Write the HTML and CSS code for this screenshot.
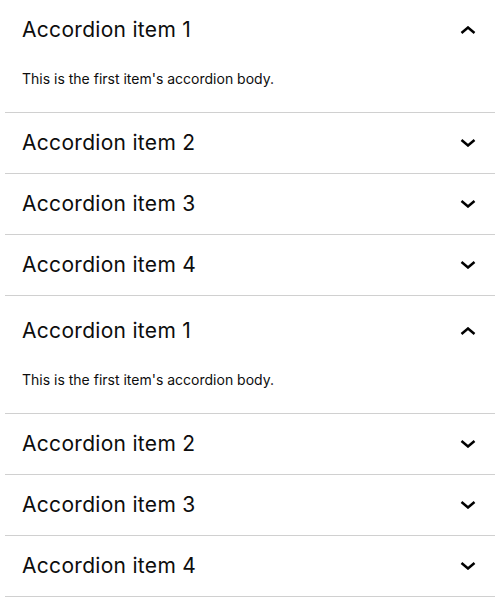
FILE: index.html
```html
<!DOCTYPE html>
<html>
<head>
<meta charset="utf-8">
<link rel="stylesheet" href="styles.css">
</head>
<body>
<div class="page">
  <div class="accordion">
    <div class="item open">
      <div class="header"><span class="title">Accordion item 1</span><svg class="chev" viewBox="0 0 16 8"><path d="M1.5 7 L8 1.5 L14.5 7"/></svg></div>
      <div class="body">This is the first item's accordion body.</div>
    </div>
    <div class="item">
      <div class="header"><span class="title">Accordion item 2</span><svg class="chev" viewBox="0 0 16 8"><path d="M1.5 1 L8 6.5 L14.5 1"/></svg></div>
    </div>
    <div class="item">
      <div class="header"><span class="title">Accordion item 3</span><svg class="chev" viewBox="0 0 16 8"><path d="M1.5 1 L8 6.5 L14.5 1"/></svg></div>
    </div>
    <div class="item">
      <div class="header"><span class="title">Accordion item 4</span><svg class="chev" viewBox="0 0 16 8"><path d="M1.5 1 L8 6.5 L14.5 1"/></svg></div>
    </div>
  </div>
  <div class="accordion">
    <div class="item open">
      <div class="header"><span class="title">Accordion item 1</span><svg class="chev" viewBox="0 0 16 8"><path d="M1.5 7 L8 1.5 L14.5 7"/></svg></div>
      <div class="body">This is the first item's accordion body.</div>
    </div>
    <div class="item">
      <div class="header"><span class="title">Accordion item 2</span><svg class="chev" viewBox="0 0 16 8"><path d="M1.5 1 L8 6.5 L14.5 1"/></svg></div>
    </div>
    <div class="item">
      <div class="header"><span class="title">Accordion item 3</span><svg class="chev" viewBox="0 0 16 8"><path d="M1.5 1 L8 6.5 L14.5 1"/></svg></div>
    </div>
    <div class="item">
      <div class="header"><span class="title">Accordion item 4</span><svg class="chev" viewBox="0 0 16 8"><path d="M1.5 1 L8 6.5 L14.5 1"/></svg></div>
    </div>
  </div>
</div>
</body>
</html>
```

FILE: styles.css
```css
html, body {
  margin: 0;
  padding: 0;
  background: #ffffff;
}
body {
  font-family: Inter, "Liberation Sans", sans-serif;
  color: #0d0d0d;
}
.page {
  padding: 0 5px;
}
.accordion + .accordion {
  margin-top: 5px;
}
.item {
  border-bottom: 1px solid #d0d0d0;
}
.header {
  height: 60px;
  display: flex;
  align-items: center;
  justify-content: space-between;
  padding: 0 19px 0 17px;
}
.title {
  font-size: 21px;
  line-height: 28px;
  letter-spacing: 0.3px;
  font-weight: 400;
}
.chev {
  width: 16px;
  height: 8px;
  fill: none;
  stroke: #000000;
  stroke-width: 2.5;
}
.body {
  font-size: 14px;
  line-height: 20px;
  padding: 9px 17px 23px;
}
```
